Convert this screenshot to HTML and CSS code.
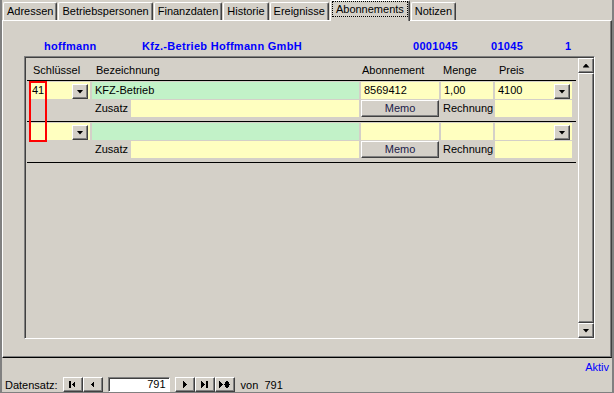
FILE: index.html
```html
<!DOCTYPE html>
<html lang="de">
<head>
  <meta charset="UTF-8">
  <meta name="viewport" content="width=device-width, initial-scale=1.0">
  <title>Adresse - Abonnements</title>
  <link rel="stylesheet" href="styles.css">
</head>
<body>
  <div class="window">

    <!-- Registerkarten -->
    <div class="tabs">
      <div class="tab">Adressen</div>
      <div class="tab">Betriebspersonen</div>
      <div class="tab">Finanzdaten</div>
      <div class="tab">Historie</div>
      <div class="tab">Ereignisse</div>
      <div class="tab active"><span class="focus">Abonnements</span></div>
      <div class="tab">Notizen</div>
    </div>

    <div class="panel">
      <div class="head">
        <span class="h-kurz">hoffmann</span>
        <span class="h-name">Kfz.-Betrieb Hoffmann GmbH</span>
        <span class="h-nr">0001045</span>
        <span class="h-kd">01045</span>
        <span>1</span>
      </div>

      <!-- Unterformular Abonnements -->
      <div class="subform">
        <div class="sub-body">
          <div class="grid labels">
            <div class="lb1">Schlüssel</div>
            <div class="lb2">Bezeichnung</div>
            <div class="lb3">Abonnement</div>
            <div class="lb4">Menge</div>
            <div class="lb5">Preis</div>
          </div>

          <div class="record">
            <div class="grid">
              <div class="field yellow combo"><span>41</span><span class="dd"><i class="arrow"></i></span></div>
              <div class="field green">KFZ-Betrieb</div>
              <div class="field yellow">8569412</div>
              <div class="field yellow">1,00</div>
              <div class="field yellow combo"><span>4100</span><span class="dd"><i class="arrow"></i></span></div>
              <div></div>
              <div class="zusatz"><span class="lbl">Zusatz</span><div class="field yellow"></div></div>
              <div class="btn memo">Memo</div>
              <div class="lbl">Rechnung</div>
              <div class="field yellow"></div>
            </div>
          </div>

          <div class="record">
            <div class="grid">
              <div class="field yellow combo"><span></span><span class="dd"><i class="arrow"></i></span></div>
              <div class="field green"></div>
              <div class="field yellow"></div>
              <div class="field yellow"></div>
              <div class="field yellow combo"><span></span><span class="dd"><i class="arrow"></i></span></div>
              <div></div>
              <div class="zusatz"><span class="lbl">Zusatz</span><div class="field yellow"></div></div>
              <div class="btn memo">Memo</div>
              <div class="lbl">Rechnung</div>
              <div class="field yellow"></div>
            </div>
          </div>

          <div class="marker"></div>
        </div>

        <div class="vscroll">
          <div class="sb-btn"><i class="arrow up"></i></div>
          <div class="sb-thumb"></div>
          <div class="sb-btn"><i class="arrow"></i></div>
        </div>
      </div>
    </div>

    <!-- Statuszeile und Navigation -->
    <div class="status">
      <div class="aktiv">Aktiv</div>
      <div class="nav">
        <span class="nav-label">Datensatz:</span>
        <span class="nbtn first-btn">
          <svg width="17" height="13"><rect x="5" y="3" width="2" height="7"/><polygon points="11,3 11,10 7.5,6.5"/></svg>
        </span>
        <span class="nbtn">
          <svg width="17" height="13"><polygon points="10,3 10,10 6.5,6.5"/></svg>
        </span>
        <span class="recno">791</span>
        <span class="nbtn">
          <svg width="17" height="13"><polygon points="7,3 7,10 10.5,6.5"/></svg>
        </span>
        <span class="nbtn">
          <svg width="17" height="13"><polygon points="5,3 5,10 8.5,6.5"/><rect x="10" y="3" width="2" height="7"/></svg>
        </span>
        <span class="nbtn">
          <svg width="17" height="13"><polygon points="3,3 3,10 6.5,6.5"/><path d="M11 3v7M8 6.5h6M8.9 4.4l4.2 4.2M13.1 4.4l-4.2 4.2" stroke="#000" stroke-width="1.3"/></svg>
        </span>
        <span class="nav-count">von&nbsp; 791</span>
      </div>
    </div>

  </div>
</body>
</html>
```

FILE: styles.css
```css
body { margin: 0; background: #d4d0c8; font-family: "Liberation Sans", Arial, sans-serif; font-size: 11px; color: #000; }
.window { width: 614px; height: 393px; box-sizing: border-box; border-left: 2px solid #808080; border-right: 2px solid #808080; border-bottom: 1px solid #808080; overflow: hidden; }

/* Registerkarten */
.tabs { height: 20px; display: flex; align-items: flex-end; padding-left: 1px; }
.tab { height: 18px; box-sizing: border-box; margin-right: 1px; padding: 0 3px; line-height: 17px; white-space: nowrap; border-top: 1px solid #fff; border-left: 1px solid #fff; border-right: 1px solid #404040; box-shadow: inset -1px 0 #808080; border-radius: 2px 2px 0 0; }
.tab.active { height: 21px; margin-bottom: -1px; padding: 0 1px; background: #d4d0c8; position: relative; z-index: 2; line-height: 14px; }
.focus { display: block; margin-top: 0; padding: 0 3px; border: 1px dotted #000; }

.panel { height: 338px; box-sizing: border-box; border-top: 1px solid #fff; border-left: 1px solid #fff; border-right: 1px solid #404040; border-bottom: 1px solid #000; box-shadow: inset -1px -1px #808080; }

.head { display: flex; padding: 19px 0 0 41px; line-height: 13px; font-weight: bold; color: #0000ff; letter-spacing: 0.3px; white-space: nowrap; }
.h-kurz { width: 98px; }
.h-name { width: 271px; }
.h-nr { width: 78px; }
.h-kd { width: 74px; }

/* Unterformular */
.subform { margin: 3px 0 0 21px; width: 571px; height: 283px; box-sizing: border-box; display: flex; border-top: 1px solid #808080; border-left: 1px solid #808080; border-right: 1px solid #fff; border-bottom: 1px solid #fff; box-shadow: inset 1px 1px #404040; padding: 1px 0 0 1px; }
.sub-body { flex: 1; position: relative; padding: 0 2px 0 1px; }
.grid { display: grid; grid-template-columns: 61px 267px 78px 52px 77px; column-gap: 2px; row-gap: 1px; grid-auto-rows: 17px; }
.labels { grid-auto-rows: 13px; line-height: 13px; padding: 6px 0 3px 2px; border-bottom: 1px solid #000; white-space: nowrap; }
.lb1, .lb2, .lb5 { padding-left: 4px; }
.lb3 { padding-left: 1px; }
.lb4 { padding-left: 2px; }

.record { padding: 1px 0 4px 2px; border-bottom: 1px solid #000; }
.field { line-height: 17px; padding-left: 3px; white-space: nowrap; }
.yellow { background: #ffffc0; }
.green { background: #c2f2c8; }
.combo { display: flex; justify-content: space-between; padding-right: 2px; }
.dd { width: 16px; height: 15px; box-sizing: border-box; align-self: flex-end; display: flex; align-items: center; justify-content: center; border-top: 1px solid #fff; border-left: 1px solid #fff; border-right: 1px solid #404040; border-bottom: 1px solid #404040; box-shadow: inset -1px -1px #808080; background: #d4d0c8; }
.arrow { display: block; width: 7px; height: 4px; background: #000; clip-path: polygon(0 0, 100% 0, 50% 100%); }
.arrow.up { clip-path: polygon(50% 0, 100% 100%, 0 100%); }

.zusatz { display: flex; }
.lbl { line-height: 17px; padding-left: 3px; white-space: nowrap; }
.zusatz .lbl { width: 36px; }
.zusatz .field { flex: 1; }
.record .grid > .lbl:nth-child(9) { padding-left: 2px; }

.btn { box-sizing: border-box; text-align: center; line-height: 15px; border-top: 1px solid #fff; border-left: 1px solid #fff; border-right: 1px solid #404040; border-bottom: 1px solid #404040; box-shadow: inset -1px -1px #808080; }
.memo { color: #202048; }

.marker { position: absolute; left: 3px; top: 23px; width: 18px; height: 61px; box-sizing: border-box; border: 2px solid #ff0000; }

.vscroll { width: 16px; display: flex; flex-direction: column; }
.sb-btn, .sb-thumb { box-sizing: border-box; border-top: 1px solid #fff; border-left: 1px solid #fff; border-right: 1px solid #404040; border-bottom: 1px solid #404040; box-shadow: inset -1px -1px #808080; }
.sb-btn { height: 15px; display: flex; align-items: center; justify-content: center; }
.sb-thumb { flex: 1; }

/* Statuszeile */
.status { height: 34px; }
.aktiv { text-align: right; color: #0000ff; line-height: 13px; padding: 3px 3px 0 0; }
.nav { display: flex; align-items: center; margin-top: 3px; height: 15px; padding-left: 3px; white-space: nowrap; }
.nav-label { margin-right: 5px; }
.nbtn { width: 20px; height: 15px; box-sizing: border-box; border-top: 1px solid #fff; border-left: 1px solid #fff; border-right: 1px solid #404040; border-bottom: 1px solid #404040; box-shadow: inset -1px -1px #808080; }
.nbtn svg { display: block; shape-rendering: crispEdges; }
.recno { width: 62px; height: 15px; box-sizing: border-box; margin: 0 5px 0 5px; background: #fff; text-align: right; padding-right: 3px; line-height: 13px; border-top: 1px solid #808080; border-left: 1px solid #808080; border-right: 1px solid #fff; border-bottom: 1px solid #fff; box-shadow: inset 1px 1px #404040; }
.nav-count { margin-left: 6px; }
```
